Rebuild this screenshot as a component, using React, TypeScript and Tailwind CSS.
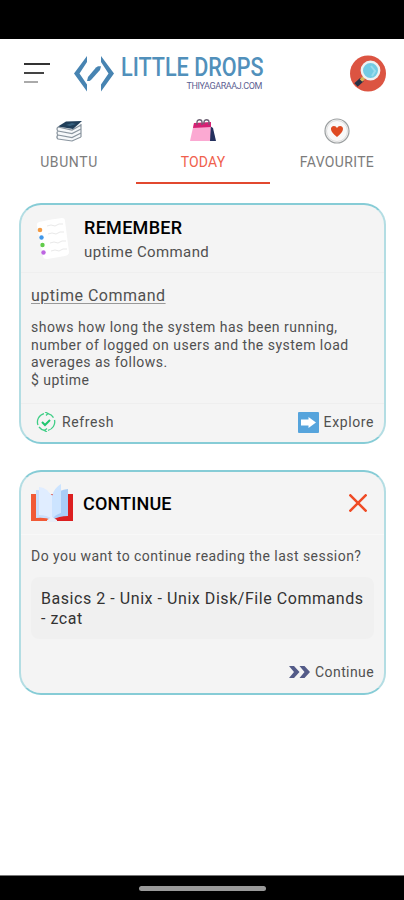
import type { ReactNode } from "react";

type TabItem = {
  label: string;
  icon: ReactNode;
  active?: boolean;
  textClass: string;
};

const LogoMark = () => (
  <svg width="40" height="36" viewBox="0 0 40 36" fill="#4784b2">
    <path d="M13 0 0 17.500 13 35.500V28.500L5.500 17.500 13 6Z" />
    <path d="M27 0 40 17.500 27 35.500V28.500L34.500 17.500 27 6Z" />
    <path d="M22 11.500 24 10.300H27L26 14 17 24 15.500 25H13L14 21Z" />
  </svg>
);

const SearchIcon = () => (
  <svg width="36" height="37" viewBox="0 0 36 37">
    <circle cx="18" cy="18.500" r="18" fill="#dc5442" />
    <path d="m12 24.500-6 5.500" stroke="#273145" strokeWidth="5" />
    <path d="m14 22.500-3 3" stroke="#d9b35a" strokeWidth="3.500" />
    <circle cx="20.500" cy="15.500" r="8.700" fill="#73cbe4" stroke="#eef1f2" strokeWidth="2.400" />
    <path d="m21 11 4 5-3 5" fill="none" stroke="#9adbed" strokeWidth="2" />
  </svg>
);

const BooksIcon = () => (
  <svg width="27" height="22" viewBox="0 0 27 22">
    <path d="M2 7v12l15 2.500 8-5V3Z" fill="#f6f8fa" />
    <path
      d="m2 7 14 3 9-5M2 7c-2 2-1 3 0 4l14 2.500L25 9M2 11c-2 2-1 3 0 4l14 2.500 9-4.500M2 15c-2 2-1 3 0 4l14 2 9-4M25 4v13"
      fill="none"
      stroke="#8a959f"
      strokeWidth="1.200"
    />
    <path d="m2 6.500 8-5L26 1l-9 8Z" fill="#203e59" />
    <path d="m10 5 6-2 4 1-6 2Z" fill="#37617f" />
  </svg>
);

const BagsIcon = () => (
  <svg width="26" height="24" viewBox="0 0 26 24">
    <path d="m20 7 3 2 3 13h-8Z" fill="#24305e" />
    <path d="M4 4h17l-1 18H0Z" fill="#fba9d2" />
    <path d="m4 4 17-1v5L3 9Z" fill="#d62174" />
    <path d="M7 6V3c0-3 5-3 5 0v3M14 5V3c0-3 5-3 5 0v3" fill="none" stroke="#6d6274" strokeWidth="1.300" />
  </svg>
);

const HeartIcon = () => (
  <svg width="26" height="26" viewBox="0 0 26 26">
    <circle cx="13" cy="13" r="12" fill="#f7f7f7" stroke="#9b9fa0" strokeWidth="1.200" />
    <circle cx="13" cy="13" r="10.500" fill="#f9f9f9" stroke="#ddd" />
    <path d="M13 19C5 13 6 8 10 8q2 0 3 2 1-2 3-2c4 0 5 5-3 11" fill="#df4b23" />
  </svg>
);

const NotesIcon = () => (
  <svg width="35" height="42" viewBox="0 0 35 42">
    <path d="M3 4Q16 1 26 0q3 0 3 3l4 31q0 3-4 4L11 41q-4 0-4-3L1 8q-1-3 2-4" fill="#fff" />
    <path
      d="m11 8 4-1 4 1 4-2h4M12 16l4-1 4 1 4-2h4M14 25l4-1 4 1 4-2h4M15 33l4-1 4 1 4-2h4"
      fill="none"
      stroke="#e9e9e9"
      strokeWidth="1"
    />
    <circle cx="4" cy="12" r="2.300" fill="#f39a43" />
    <circle cx="5.500" cy="19.500" r="2.200" fill="#4098ea" />
    <circle cx="6.500" cy="27" r="2.200" fill="#62cc4b" />
    <circle cx="7.500" cy="34.500" r="2.200" fill="#bd65e1" />
  </svg>
);

const OpenBookIcon = () => (
  <svg width="42" height="38" viewBox="0 0 42 38">
    <path d="M0 10h21v27H0Z" fill="#f15a36" />
    <path d="M21 10h21v27H21Z" fill="#dc1f20" />
    <path d="M5 6q8 0 16 5v25q-7-3-16-2Z" fill="#c9dffc" />
    <path d="M8 3q4 0 8 3l5 6v23q-5-4-13-4Z" fill="#e0edff" />
    <path d="M37 5q-9 1-16 7v24q7-4 16-4Z" fill="#a9cdf7" />
    <path d="M30 0q-7 4-9 12v24q2-5 9-7Z" fill="#cce4ff" />
    <path d="m16 36 5-3 5 3v2H16Z" fill="#e8eef8" />
  </svg>
);

const RefreshIcon = () => (
  <svg width="20" height="20" viewBox="0 0 20 20" fill="none" stroke="#3fce86" strokeWidth="1.300">
    <path d="M2 13A8.500 8.500 0 0 1 8 1.700M12 1.700a8.500 8.500 0 0 1 5.500 4M18.500 8A8.500 8.500 0 0 1 12 18.300M9 18.500a8.500 8.500 0 0 1-6-3.500" />
    <path d="m9 0 3 1.500-2 2M11 16.500 8.500 18.500l2.500 1.500" />
    <path d="m6 10 3 3 5-5" stroke="#1fc66f" strokeWidth="2" />
  </svg>
);

const ExploreIcon = () => (
  <svg width="21" height="21" viewBox="0 0 21 21">
    <rect width="21" height="21" rx="1" fill="#56a4dc" />
    <path d="M3 7.500h7.500V5l7.500 5.500-7.500 5.500v-2.500H3Z" fill="#fff" />
  </svg>
);

const ForwardIcon = () => (
  <svg width="21" height="12" viewBox="0 0 21 12" fill="#535b88">
    <path d="M0 0h5l5.500 6L5 12H0l5-6ZM10.500 0h5L21 6l-5.500 6h-5l5-6Z" />
  </svg>
);

const tabs: TabItem[] = [
  { label: "UBUNTU", icon: <BooksIcon />, textClass: "text-[#7c7c7c] tracking-[0.6px]" },
  { label: "TODAY", icon: <BagsIcon />, active: true, textClass: "text-[#f0604c] tracking-[0.2px]" },
  { label: "FAVOURITE", icon: <HeartIcon />, textClass: "text-[#7c7c7c] tracking-[0.35px]" },
];

const Header = () => (
  <header className="flex h-[66px] items-start pl-6 pr-[18px] pt-[16px]">
    <button aria-label="Menu" className="mt-[8px] flex w-[26px] flex-col gap-[7px]">
      <span className="h-[2px] w-[26px] bg-[#333]" />
      <span className="h-[2px] w-[20px] bg-[#444]" />
      <span className="h-[2px] w-[14px] bg-[#aaa]" />
    </button>
    <div className="ml-[24px] mt-[1px]">
      <LogoMark />
    </div>
    <div className="ml-[7px] w-[141px]">
      <p className="origin-left scale-x-[0.83] whitespace-nowrap text-[26px] font-medium leading-[25px] text-[#5190bb]">
        LITTLE DROPS
      </p>
      <p className="mt-[1px] whitespace-nowrap text-right text-[9px] leading-[11px] tracking-[-0.4px] text-[#5d5f92]">
        THIYAGARAAJ.COM
      </p>
    </div>
    <button aria-label="Search" className="ml-auto">
      <SearchIcon />
    </button>
  </header>
);

const Tabs = () => (
  <nav className="ml-[2px] grid h-[79px] grid-cols-3">
    {tabs.map((tab) => (
      <button
        key={tab.label}
        className={
          tab.active
            ? "flex flex-col items-center border-b-2 border-[#e2482f] pt-[12px]"
            : "flex flex-col items-center border-b-2 border-transparent pt-[12px]"
        }
      >
        <span className="flex h-[27px] items-center">{tab.icon}</span>
        <span className={`mt-[9px] whitespace-nowrap text-[14px] leading-[19px] ${tab.textClass}`}>{tab.label}</span>
      </button>
    ))}
  </nav>
);

const RememberCard = () => (
  <section className="ml-[19px] mr-[18px] mt-[19px] h-[241px] rounded-[22px] border-2 border-x-[#b3dde3] border-y-[#86ccd6] bg-[#f4f4f4] text-[#505050]">
    <div className="flex h-[68px] border-b border-[#efefef] pl-[15px]">
      <div className="mt-[13px]">
        <NotesIcon />
      </div>
      <div className="ml-[13px] pt-[12px]">
        <h2 className="whitespace-nowrap text-[18px] font-medium leading-[22px] tracking-[0.3px] text-black">REMEMBER</h2>
        <p className="mt-[2px] whitespace-nowrap text-[15px] leading-[22px] tracking-[0.4px]">uptime Command</p>
      </div>
    </div>
    <div className="h-[131px] border-b border-[#eee] pl-[10px] pt-[12px]">
      <h3 className="whitespace-nowrap text-[16px] leading-[22px] tracking-[0.5px] underline decoration-[#999] underline-offset-2">
        uptime Command
      </h3>
      <p className="mt-[12px] whitespace-nowrap text-[14px] leading-[17.700px] tracking-[0.48px]">
        shows how long the system has been running,
        <br />
        number of logged on users and the system load
        <br />
        averages as follows.
        <br />$ uptime
      </p>
    </div>
    <div className="flex h-[36px] items-center justify-between pl-[15px] pr-[10px] text-[14px] tracking-[0.6px]">
      <button className="flex items-center gap-[6px]">
        <RefreshIcon />
        Refresh
      </button>
      <button className="flex items-center gap-[5px]">
        <ExploreIcon />
        Explore
      </button>
    </div>
  </section>
);

const ContinueCard = () => (
  <section className="ml-[19px] mr-[18px] mt-[26px] h-[225px] rounded-[22px] border-2 border-x-[#b3dde3] border-y-[#86ccd6] bg-[#f4f4f4] text-[#505050]">
    <div className="flex h-[63px] items-center border-b border-[#f8f8f8] pl-[10px] pr-[17px]">
      <OpenBookIcon />
      <h2 className="ml-[10px] whitespace-nowrap text-[18px] font-medium tracking-[0.15px] text-black">CONTINUE</h2>
      <button aria-label="Close" className="ml-auto">
        <svg width="18" height="18" viewBox="0 0 18 18" stroke="#ef4b25" strokeWidth="2.500">
          <path d="m0.500 0.500 17 17M17.500 0.500l-17 17" />
        </svg>
      </button>
    </div>
    <div className="px-[10px] pt-[10px]">
      <p className="whitespace-nowrap text-[14px] leading-[22px] tracking-[0.46px]">
        Do you want to continue reading the last session?
      </p>
      <div className="mt-[10px] h-[62px] rounded-[8px] bg-[#f0f0f0] pl-[10px] pt-[12px]">
        <p className="whitespace-nowrap text-[16px] leading-[20px] tracking-[0.55px] text-[#333]">
          Basics 2 - Unix - Unix Disk/File Commands
          <br />- zcat
        </p>
      </div>
      <button className="ml-auto mt-[23px] flex items-center gap-[5px] text-[14px] leading-[20px] tracking-[0.4px]">
        <ForwardIcon />
        Continue
      </button>
    </div>
  </section>
);

export const App = () => {
  return (
    <div className="flex h-[900px] w-[404px] flex-col overflow-hidden bg-white font-['Roboto','Open_Sans',sans-serif]">
      <div className="h-[39px] shrink-0 bg-black" />
      <main className="flex-1">
        <Header />
        <Tabs />
        <RememberCard />
        <ContinueCard />
      </main>
      <footer className="flex h-[25px] shrink-0 items-center justify-center border-t border-[#777] bg-black">
        <div className="h-[5px] w-[127px] rounded-full bg-[#999]" />
      </footer>
    </div>
  );
};

export default App;
